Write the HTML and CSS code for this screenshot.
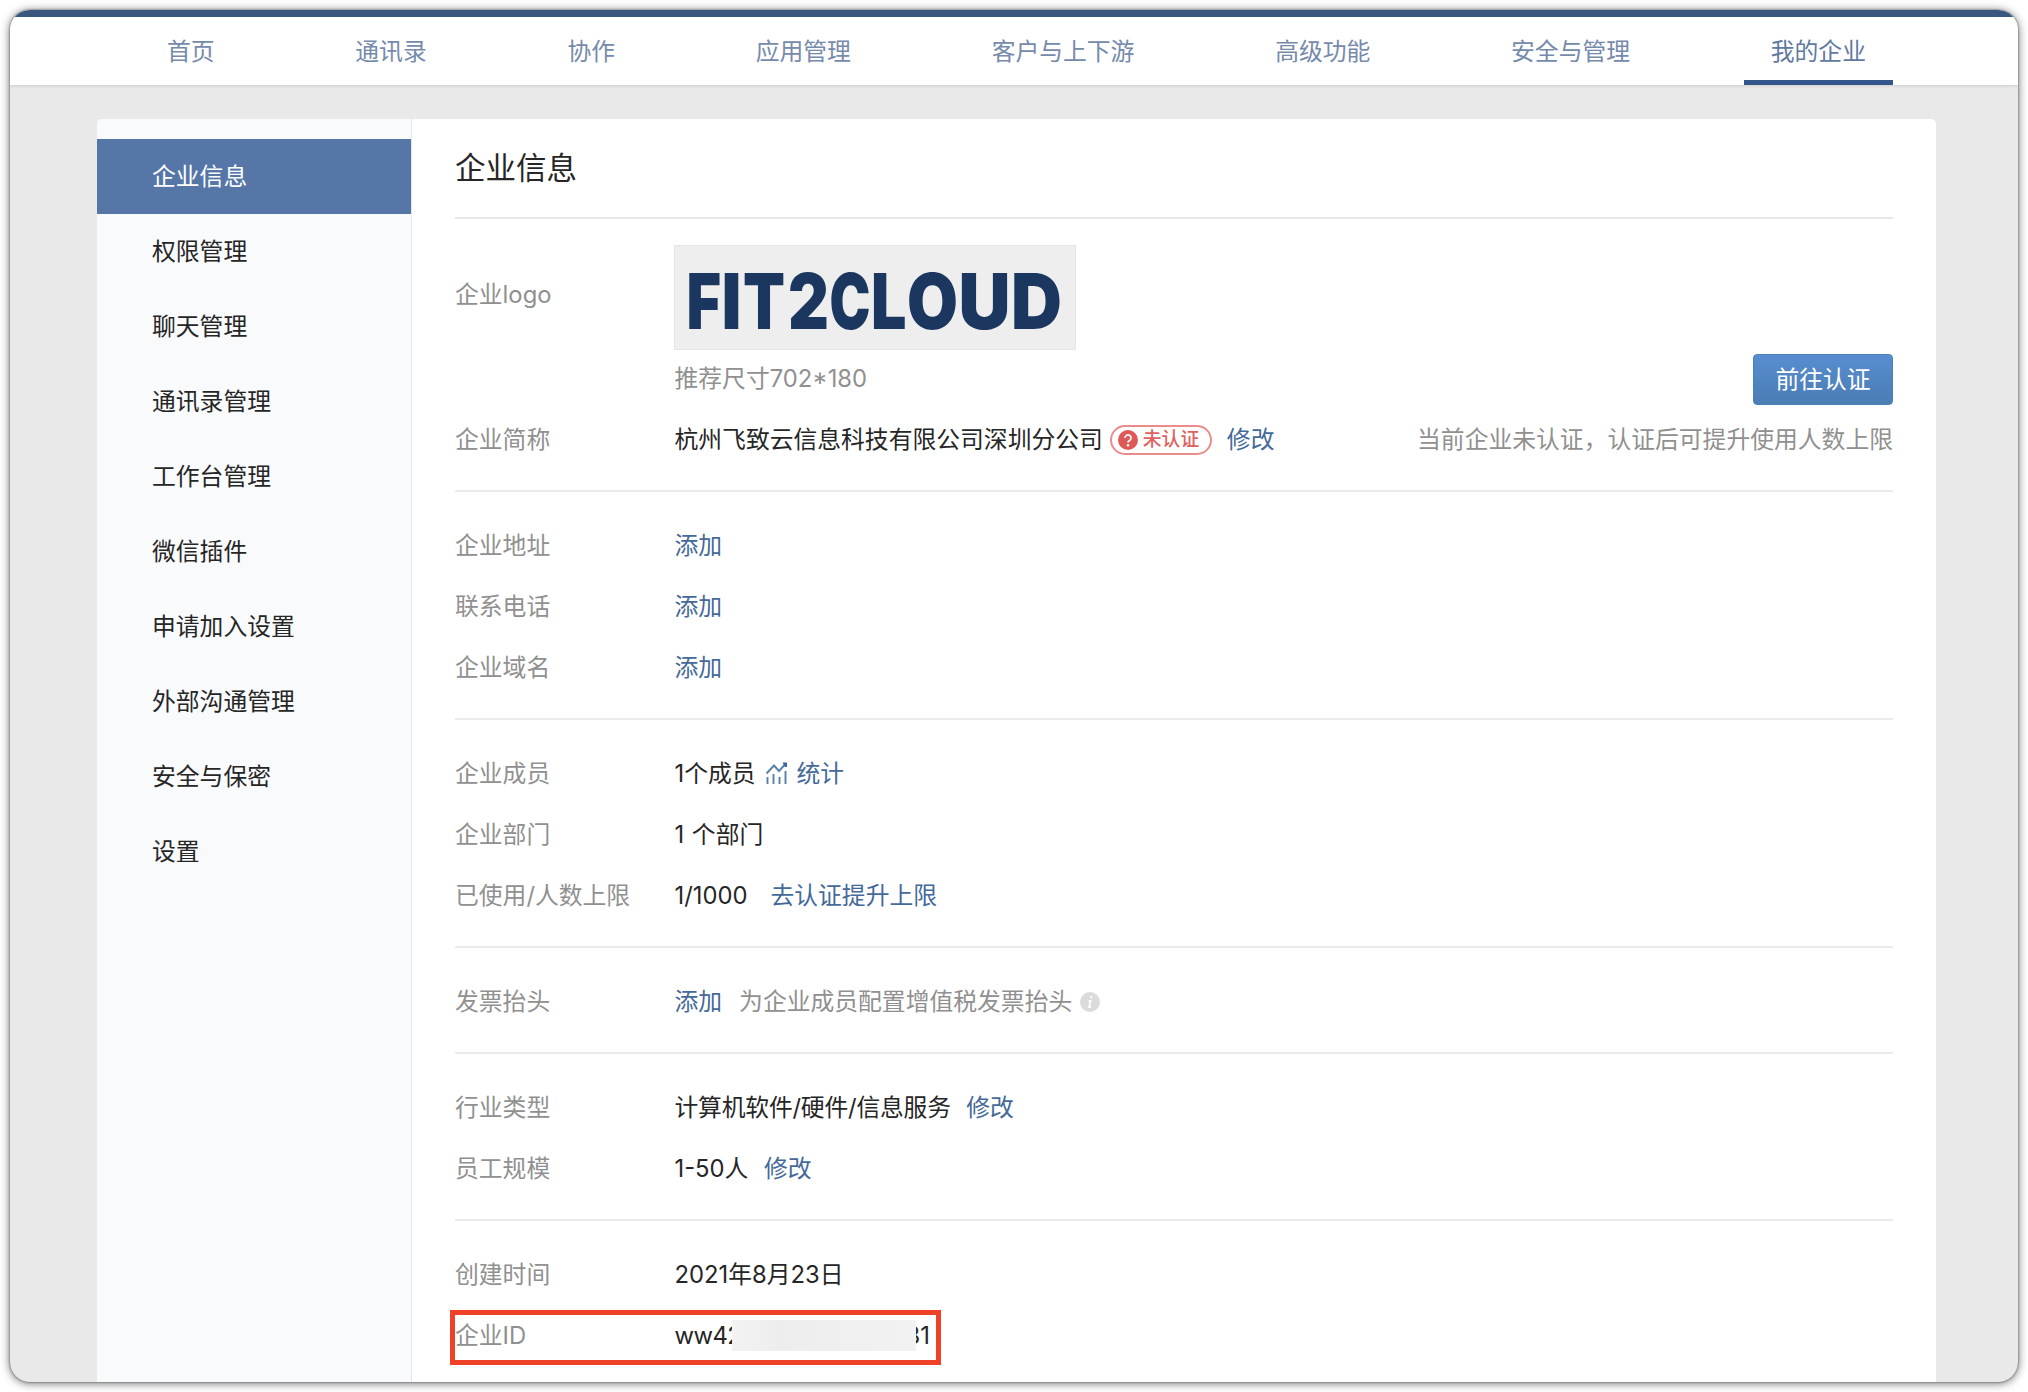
FILE: index.html
```html
<!DOCTYPE html>
<html lang="zh-CN">
<head>
<meta charset="utf-8">
<title>企业信息</title>
<link rel="stylesheet" href="styles.css">
</head>
<body>
<div class="window">
  <header class="header">
    <nav class="nav">
      <a class="nav-item">首页</a>
      <a class="nav-item">通讯录</a>
      <a class="nav-item">协作</a>
      <a class="nav-item">应用管理</a>
      <a class="nav-item">客户与上下游</a>
      <a class="nav-item">高级功能</a>
      <a class="nav-item">安全与管理</a>
      <a class="nav-item nav-item-active">我的企业</a>
    </nav>
  </header>
  <div class="panel">
    <aside class="sidebar">
      <a class="menu-item menu-item-active">企业信息</a>
      <a class="menu-item">权限管理</a>
      <a class="menu-item">聊天管理</a>
      <a class="menu-item">通讯录管理</a>
      <a class="menu-item">工作台管理</a>
      <a class="menu-item">微信插件</a>
      <a class="menu-item">申请加入设置</a>
      <a class="menu-item">外部沟通管理</a>
      <a class="menu-item">安全与保密</a>
      <a class="menu-item">设置</a>
    </aside>
    <main class="content">
      <h1 class="title">企业信息</h1>
      <section class="group group-brand">
        <div class="row row-logo">
          <span class="label label-logo">企业logo</span>
          <div class="logo-cell">
            <div class="logo-box">
              <svg class="logo" viewBox="0 0 402 105" width="402" height="105">
                <text class="logo-text" y="83.500"><tspan x="12.500" textLength="34.500" lengthAdjust="spacingAndGlyphs">F</tspan><tspan x="47.500" textLength="20" lengthAdjust="spacingAndGlyphs">I</tspan><tspan x="69" textLength="42" lengthAdjust="spacingAndGlyphs">T</tspan><tspan x="114" textLength="41" lengthAdjust="spacingAndGlyphs">2</tspan><tspan x="155.500" textLength="41" lengthAdjust="spacingAndGlyphs">C</tspan><tspan x="197" textLength="35.500" lengthAdjust="spacingAndGlyphs">L</tspan><tspan x="233" textLength="51" lengthAdjust="spacingAndGlyphs">O</tspan><tspan x="284.500" textLength="52" lengthAdjust="spacingAndGlyphs">U</tspan><tspan x="337" textLength="51" lengthAdjust="spacingAndGlyphs">D</tspan></text>
              </svg>
            </div>
            <span class="hint">推荐尺寸702*180</span>
          </div>
          <button class="verify-button">前往认证</button>
        </div>
        <div class="row">
          <span class="label">企业简称</span>
          <span>杭州飞致云信息科技有限公司深圳分公司</span>
          <span class="badge"><svg class="badge-icon" viewBox="0 0 20 20" width="20" height="20"><circle cx="10" cy="10" r="10" fill="#dd5a56"/><path d="M7 8a3 3 0 1 1 4.600 2.500Q10 11.400 10 12.500" fill="none" stroke="#fff" stroke-width="1.700"/><circle cx="10" cy="15.200" r="1.200" fill="#fff"/></svg>未认证</span>
          <a class="link link-edit">修改</a>
          <span class="note">当前企业未认证，认证后可提升使用人数上限</span>
        </div>
      </section>
      <section class="group">
        <div class="row"><span class="label">企业地址</span><a class="link">添加</a></div>
        <div class="row"><span class="label">联系电话</span><a class="link">添加</a></div>
        <div class="row"><span class="label">企业域名</span><a class="link">添加</a></div>
      </section>
      <section class="group">
        <div class="row"><span class="label">企业成员</span><span>1个成员</span><svg class="stats-icon" viewBox="0 0 24 24" width="24" height="24"><path d="M2.500 22v-7M8.500 22V12M14.500 22v-7M20.500 22V9M1.500 11.500l7.500-8 5 5.500 6-6.500" fill="none" stroke="#5a7fab" stroke-width="1.900"/><path d="M17.500 .5h4.500v4.500h-2z" fill="#3f6698"/></svg><a class="link">统计</a></div>
        <div class="row"><span class="label">企业部门</span><span class="departments">1 个部门</span></div>
        <div class="row"><span class="label">已使用/人数上限</span><span>1/1000</span><a class="link link-upgrade">去认证提升上限</a></div>
      </section>
      <section class="group">
        <div class="row"><span class="label">发票抬头</span><a class="link">添加</a><span class="invoice-note">为企业成员配置增值税发票抬头</span><svg class="info-icon" viewBox="0 0 20 20" width="20" height="20"><circle cx="10" cy="10" r="10" fill="#dadbdd"/><path d="M11.500 4.200l-.4 2M8.500 9h2l-1.200 6h1.700" fill="none" stroke="#fff" stroke-width="1.900"/></svg></div>
      </section>
      <section class="group">
        <div class="row"><span class="label">行业类型</span><span class="industry">计算机软件/硬件/信息服务</span><a class="link link-after">修改</a></div>
        <div class="row"><span class="label">员工规模</span><span>1-50人</span><a class="link link-after">修改</a></div>
      </section>
      <section class="group">
        <div class="row"><span class="label">创建时间</span><span>2021年8月23日</span></div>
        <div class="row row-marked"><span class="label">企业ID</span><span class="id-start">ww42</span><span class="id-mask"></span><span class="id-end">81</span></div>
      </section>
    </main>
  </div>
</div>
</body>
</html>
```

FILE: styles.css
```css
* { box-sizing: border-box; }
body {
  margin: 0;
  padding: 10px;
  height: 1392px;
  overflow: hidden;
  background: #fff;
  color: #262626;
  font: 23.8px/34px Inter, "Noto Sans CJK SC", sans-serif;
  white-space: nowrap;
}
.window {
  height: 1372px;
  overflow: hidden;
  border-radius: 20px;
  background: #e9e9e9;
  box-shadow: 0 0 2px rgba(0,0,0,.6), 0 1px 10px rgba(0,0,0,.6);
}
.header {
  height: 75px;
  padding: 0 125px 0 87px;
  border-top: 7px solid #39577f;
  background: #fff;
  box-shadow: 0 1px 3px rgba(0,0,0,.12);
}
.nav { display: flex; justify-content: space-between; height: 68px; }
.nav-item {
  height: 68px;
  padding: 18px 27px 0 70px;
  color: #768aac;
}
.nav-item-active {
  margin-left: 43px;
  padding-left: 27px;
  border-bottom: 5px solid #34558a;
  color: #6279a1;
}
.panel {
  display: flex;
  width: 1839px;
  height: 1264px;
  margin: 34px 0 0 87px;
  border-radius: 5px 5px 0 0;
  overflow: hidden;
  background: #fff;
}
.sidebar {
  width: 315px;
  padding-top: 20px;
  border-right: 1px solid #e3e7ed;
  background: #f9fafc;
}
.menu-item { display: block; height: 75px; padding: 21px 0 0 55px; }
.menu-item-active { background: #5576a7; color: #fff; }
.content { flex: 1; padding: 0 43px; }
.title {
  height: 100px;
  margin: 0;
  padding-top: 27px;
  border-bottom: 2px solid #e6e7eb;
  font-size: 30.5px;
  line-height: 44px;
  font-weight: 400;
}
.group { padding: 22px 0 21px; border-bottom: 2px solid #e9ebef; }
.group:last-child { border-bottom: 0; }
.row { display: flex; align-items: center; height: 61px; padding-top: 2px; }
.label { width: 219.5px; color: #909090; }
.link { color: #44699a; }
.group-brand { height: 273px; padding-top: 26px; }
.row-logo { height: 163px; padding-top: 0; align-items: flex-start; }
.label-logo { width: 219px; padding-top: 33px; }
.logo-box { width: 402px; height: 105px; background: #eee; outline: 1px solid #e6e6e6; outline-offset: -1px; }
.logo { display: block; }
.logo-text { font: 900 76.600px Inter, sans-serif; fill: #1b365f; }
.hint { display: block; padding: 12px 0 0 .5px; color: #909090; }
.verify-button {
  width: 140px;
  height: 51px;
  margin: 109px 0 0 auto;
  padding: 0;
  border: 1px solid #4a80bd;
  border-radius: 4px;
  background: linear-gradient(#588dd1, #4a7db3);
  color: #fff;
  font: inherit;
}
.badge {
  display: flex;
  align-items: center;
  gap: 5px;
  width: 102px;
  height: 30px;
  margin-left: 7px;
  padding-left: 6px;
  border: 2px solid #ea8c89;
  border-radius: 15px;
  color: #de625e;
  font-size: 18.8px;
  font-weight: 500;
}
.link-edit { margin-left: 15px; }
.note { margin-left: auto; color: #909090; }
.stats-icon { margin: 0 8px 0 9px; }
.departments { word-spacing: 1px; }
.link-upgrade { margin-left: 23px; }
.invoice-note { margin-left: 17px; color: #909090; }
.info-icon { margin-left: 8px; }
.industry { letter-spacing: -.2px; }
.link-after { margin-left: 15.5px; }
.row-marked {
  width: 491px;
  height: 55px;
  margin: 6px 0 0 -5px;
  padding: 0 0 4px 0;
  border: 5px solid #ee4128;
}
.id-start { width: 57px; letter-spacing: -.5px; }
.id-mask { z-index: 1; width: 184px; height: 31px; background: linear-gradient(90deg, #f3f3f3, #ededed 25%, #f2f2f2); }
.id-end { margin-left: -10px; }
```
